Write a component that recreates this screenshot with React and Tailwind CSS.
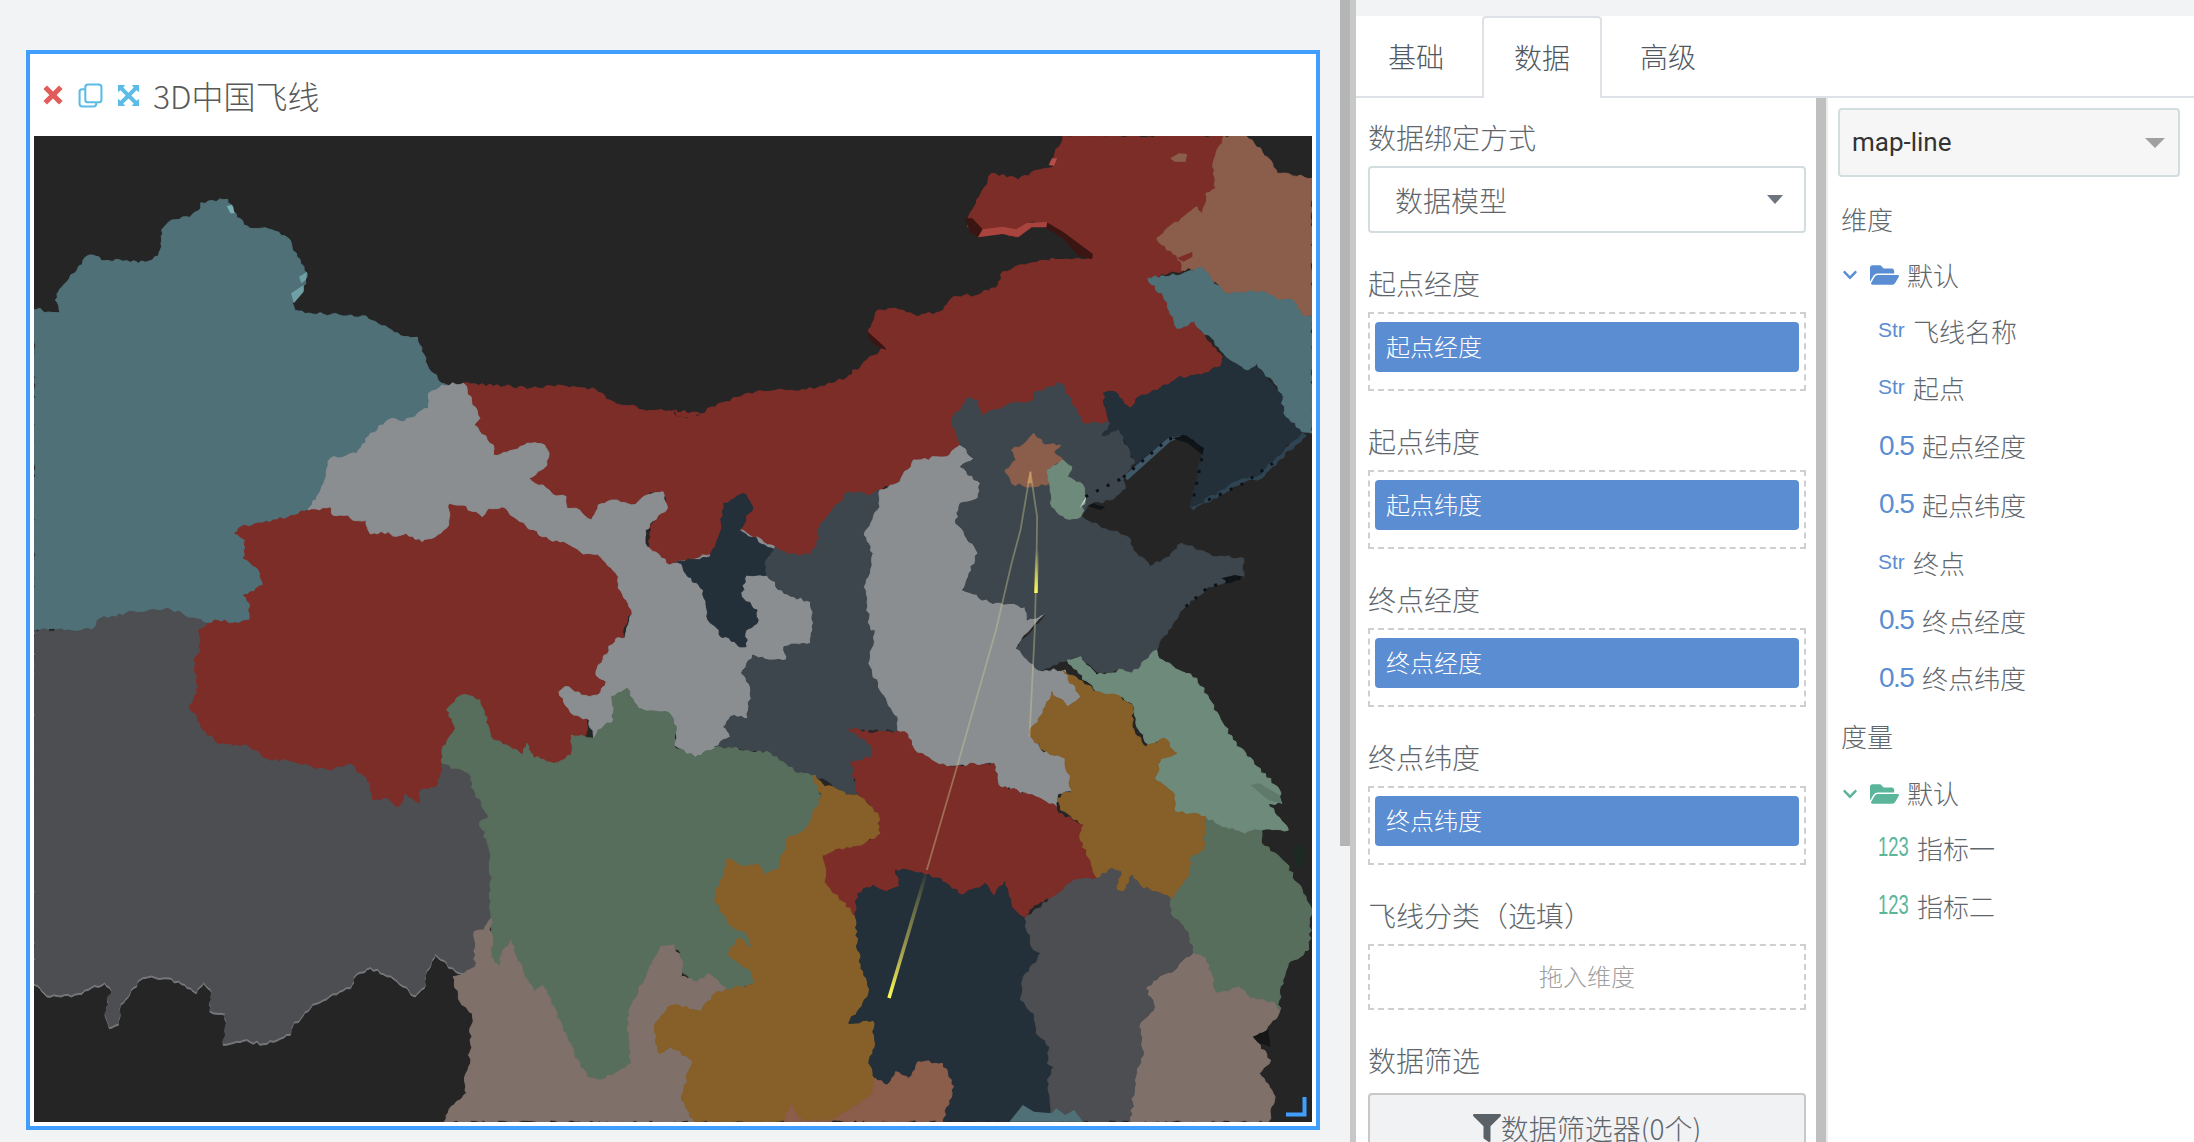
import React from "react";
import { FaChevronDown, FaFolderOpen, FaFilter } from "react-icons/fa";

const O = { A: [0, 130], B: [650, 130], C: [0, 630], D: [650, 630] };
const parse = (s) => {
  const out = [];
  let p = "A";
  s.trim().split(/\s+/).forEach((t) => {
    if (O[t]) { p = t; return; }
    const [x, y] = t.split(",").map(Number);
    out.push([O[p][0] + x / 2.24, O[p][1] + y / 3]);
  });
  return out;
};
const hash = (a, b, c, d, k) => {
  const v = Math.sin(a * 12.9898 + b * 78.233 + c * 37.719 + d * 11.135 + k * 5.37) * 43758.5453;
  return v - Math.floor(v) - 0.5;
};
const rough = (pts, amp = 3.5) => {
  const res = [];
  pts.forEach((p, i) => {
    const q = pts[(i + 1) % pts.length];
    res.push(p);
    const len = Math.hypot(q[0] - p[0], q[1] - p[1]);
    const n = Math.floor(len / 4);
    const fw = p[0] < q[0] || (p[0] === q[0] && p[1] < q[1]);
    const [a, b] = fw ? [p, q] : [q, p];
    const nx = -(b[1] - a[1]) / (len || 1), ny = (b[0] - a[0]) / (len || 1);
    const seq = [];
    for (let k = 1; k <= n; k++) {
      const t = k / (n + 1);
      const m = hash(a[0], a[1], b[0], b[1], k) * amp * Math.min(1, len / 20);
      seq.push([a[0] + (b[0] - a[0]) * t + nx * m, a[1] + (b[1] - a[1]) * t + ny * m]);
    }
    if (!fw) seq.reverse();
    res.push(...seq);
  });
  return res;
};
const toS = (pts) => pts.map((p) => p[0].toFixed(1) + "," + p[1].toFixed(1)).join(" ");

const TEAL = "#4f7077", RED = "#7d2d28", GRAY = "#8a8e91", SLATE = "#3d464d", NAVY = "#232f39", DGRAY = "#4d4e52",
  GREEN = "#586e5d", ORANGE = "#875f28", PINK = "#7f706a", TERRA = "#8b5d4b", LGREEN = "#6e8a7a";

const TIBET = "A 76,1500 205,1500 225,1465 300,1445 375,1435 465,1480 C 500,100 1000,400 1050,430 1065,490 1095,560 1075,575 1095,650 1100,780 1100,865 1085,900 1062,905 1065,1010 1040,1030 1020,1020 975,970 955,1020 950,1070 930,1095 875,1035 830,1010 795,1035 785,1070 700,1120 655,1185 650,1210 590,1238 545,1228 500,1240 505,1150 470,1140 475,1085 455,1055 440,1085 400,1050 340,1035 320,1040 290,1090 270,1120 265,1180 245,1190 235,1150 250,1080 235,1055 160,1095 105,1095 76,1060";

const regions = [
  [TEAL, "A 76,540 90,535 100,548 135,548 124,510 135,475 150,455 200,375 235,392 300,392 310,400 355,378 362,350 362,300 385,270 425,262 450,235 450,218 510,208 530,262 560,295 610,300 650,330 665,380 688,430 680,480 655,520 660,540 700,552 820,558 870,595 905,620 935,622 960,715 990,760 1040,800 1000,900 700,1200 560,1500 76,1500"],
  ["#77787b", TIBET, 0, 2],
  [DGRAY, TIBET],
  [RED, "A 525,1210 540,1190 620,1170 690,1140 740,1130 745,1155 780,1155 790,1170 820,1170 830,1212 870,1205 880,1218 910,1210 945,1235 975,1220 1005,1185 1005,1120 1035,1125 1080,1160 1095,1135 1125,1130 1150,1160 1215,1220 1270,1240 1300,1265 1345,1280 1385,1340 1385,1375 1415,1440 1395,1500 C 1400,25 1380,25 1340,105 1335,135 1358,155 1340,195 1320,200 1265,170 1252,185 1285,255 1315,260 1315,300 1310,320 1280,315 1280,375 1240,400 1205,380 1195,385 1180,340 1170,375 1135,345 1105,330 1075,210 1035,195 1022,205 1000,240 1020,295 990,360 990,400 985,440 975,470 940,480 940,520 910,490 890,530 870,505 835,510 830,460 785,400 740,420 700,410 660,395 600,385 555,345 490,340 450,290 425,225 445,170 435,90 450,60 445,0 A 480,1470 535,1480 560,1470 560,1420 545,1395 590,1365 580,1320 545,1285 550,1230"],
  [RED, "A 1038,760 1190,775 1250,765 1335,780 1365,810 1440,840 1515,840 1515,858 1545,865 1568,850 B 50,842 58,860 90,865 170,815 245,782 350,780 440,745 480,695 525,655 490,610 510,540 550,535 600,560 650,545 680,500 735,495 780,465 790,425 840,405 900,385 985,385 925,310 885,280 850,275 820,320 790,310 735,320 710,290 722,240 765,130 825,150 870,120 905,110 905,80 925,18 1285,18 1260,110 1268,175 1245,190 1240,260 1225,230 1135,325 1190,390 1195,420 1115,445 1150,500 1180,595 1220,575 1260,650 1282,680 1280,705 1235,735 1180,745 1160,765 1095,800 1075,835 1040,785 1015,790 1035,830 1030,880 970,880 950,830 920,760 860,790 860,810 800,825 740,855 735,810 710,805 675,870 695,945 665,980 590,990 560,1055 510,1080 495,1095 445,1085 375,1200 380,1225 360,1275 310,1275 280,1250 200,1200 230,1130 210,1090 165,1120 155,1215 135,1275 60,1295 40,1305 0,1265 0,1190 40,1130 30,1090 0,1085 A 1450,1095 1415,1125 1375,1110 1340,1125 1325,1170 1290,1135 1270,1135 1268,1100 1240,1095 1230,1080 1185,1045 1225,1005 1230,970 1220,945 1190,940 1150,960 1105,975 1105,945 1062,885 1075,865"],
  ["#3a1512", "B 706,265 722,265 745,298 735,322 718,310"],
  ["#3a1512", "B 888,276 925,305 992,372 990,388 960,378 925,325 885,292"],
  ["#a8443d", "B 735,322 745,298 790,290 820,298 845,278 890,276 888,292 855,292 825,322 790,312"],
  ["#3a1512", "B 488,605 525,650 530,660 510,650 490,625"],
  ["#b34d45", "B 893,105 900,85 912,85 905,108"],
  [GRAY, "A 690,1140 715,1090 740,985 800,970 830,910 880,865 905,875 960,835 960,790 990,765 1038,760 1075,865 1062,885 1105,945 1105,975 1150,960 1190,940 1220,945 1230,970 1225,1005 1185,1045 1230,1080 1240,1095 1268,1100 1270,1135 1290,1135 1325,1170 1340,1125 1375,1110 1415,1125 1450,1095 1485,1085 1495,1135 1445,1200 1445,1240 1500,1305 1530,1300 B 60,1295 135,1275 200,1200 280,1250 262,1335 300,1390 360,1415 365,1500 D 360,40 300,90 265,90 230,75 205,130 225,170 220,265 180,260 165,290 180,320 150,350 100,385 55,345 60,300 30,250 C 1510,350 1515,300 1500,250 1430,235 1405,175 1370,200 1375,270 1340,300 1330,325 1320,270 1285,255 1252,185 1265,170 1320,200 1340,195 1358,155 1335,135 1340,105 1380,25 1400,25 A 1415,1440 1385,1375 1385,1340 1345,1280 1300,1265 1270,1240 1215,1220 1150,1160 1125,1130 1095,1135 1080,1160 1035,1125 1005,1120 1005,1185 975,1220 945,1235 910,1210 880,1218 870,1205 830,1212 820,1170 790,1170 780,1155 745,1155 740,1130"],
  [NAVY, "B 60,1295 135,1280 155,1215 165,1120 210,1090 230,1130 200,1200 280,1260 258,1300 262,1335 215,1335 205,1400 240,1440 240,1480 215,1500 D 215,50 200,50 190,35 155,15 155,0 B 130,1470 120,1380 85,1340 70,1300"],
  [SLATE, "B 258,1300 280,1250 310,1275 360,1275 380,1225 375,1200 445,1085 495,1095 515,1080 515,1130 480,1215 500,1270 490,1340 480,1370 495,1500 D 505,0 490,100 520,190 555,260 555,300 500,300 470,300 445,295 500,345 500,380 450,395 465,495 435,490 370,435 330,430 270,370 145,350 180,320 165,290 180,260 220,265 225,170 205,130 230,75 265,90 305,90 300,50 360,40 365,0 B 365,1500 360,1415 300,1390 262,1335"],
  [GRAY, "B 515,1080 560,1055 590,990 665,980 695,945 725,985 695,1010 740,1060 735,1105 695,1120 685,1180 735,1270 715,1330 700,1380 760,1415 840,1430 845,1470 890,1445 850,1500 D 820,55 870,120 930,120 965,200 935,230 900,185 880,250 850,310 875,360 930,385 945,480 915,490 910,530 880,510 820,480 780,465 770,400 690,405 665,410 600,370 555,300 555,260 520,190 490,100 505,0 B 495,1500 480,1370 490,1340 500,1270 480,1215 515,1130"],
  ["#2f4452", "B 1460,908 1470,918 1405,995 1375,1040 1305,1070 1218,1140 1210,1130 1230,1120 1300,1060 1370,1030 1400,985"],
  [NAVY, "B 1015,790 1040,785 1075,835 1095,800 1160,765 1180,745 1235,735 1280,705 1285,670 1335,720 1355,700 1415,790 1420,850 1460,905 1400,985 1370,1030 1300,1060 1230,1120 1210,1130 1240,960 1200,920 1160,930 1090,1005 1050,900 1010,920 1030,880"],
  ["#3f5868", "B 1060,1040 1090,1005 1160,925 1200,915 1165,935 1095,1020 1070,1050"],
  ["#0f1418", "B 1170,925 1200,915 1240,955 1238,975 1205,940"],
  ["#0f1418", "B 975,1100 1000,1125 1020,1130 1010,1140 985,1130"],
  [SLATE, "B 675,870 710,805 735,810 740,855 800,825 860,810 860,790 920,760 950,830 970,880 1030,880 1010,920 1050,900 1085,1000 1060,1040 1065,1075 1030,1110 980,1125 965,1160 990,1180 1070,1220 1090,1270 1120,1310 1165,1280 1190,1240 1270,1280 1330,1285 1330,1340 1250,1370 1200,1430 1160,1500 D 1135,60 1110,90 1080,130 1050,115 1010,130 960,80 870,120 820,55 B 890,1445 845,1470 840,1430 760,1415 700,1380 715,1330 735,1270 685,1180 695,1120 735,1105 740,1060 695,1010 725,985 695,945"],
  ["#0f1418", "B 1280,1345 1310,1335 1330,1340 1300,1360"],
  [TERRA, "B 860,910 885,945 920,945 905,965 925,990 890,1020 895,1060 860,1070 810,1060 795,1020 820,990 810,960 840,940"],
  [LGREEN, "B 925,990 945,1010 935,1040 970,1065 975,1100 965,1160 930,1165 900,1130 895,1060 890,1020 910,1005"],
  [TERRA, "B 1285,18 1335,18 1390,90 1405,130 1483,145 1483,555 1465,560 1440,510 1410,510 1365,485 1290,490 1255,440 1240,415 1190,420 1190,395 1135,325 1225,230 1240,260 1245,190 1268,175 1260,110"],
  [TERRA, "B 1165,85 1185,70 1203,72 1200,95 1175,95"],
  [TEAL, "B 1115,445 1195,430 1240,415 1255,445 1290,490 1365,485 1410,510 1440,510 1465,560 1483,558 1483,910 1460,905 1420,850 1415,790 1360,700 1340,720 1285,670 1220,575 1180,595 1150,500"],
  [RED, "B 1180,385 1215,365 1215,380 1195,395"],
  [GREEN, "C 1022,205 1035,195 1075,210 1105,330 1135,345 1170,375 1180,340 1195,385 1205,380 1240,400 1280,375 1280,315 1310,320 1330,325 1340,300 1375,270 1370,200 1405,175 1430,235 1500,250 1515,300 1510,350 1560,385 D 100,385 150,350 270,370 330,430 370,435 385,500 345,605 310,620 290,710 260,735 240,700 205,710 175,685 145,810 185,890 215,905 230,960 200,925 175,970 225,1020 235,1060 175,1085 130,1030 100,1060 70,1020 65,960 30,945 C 1510,945 1480,950 1450,1030 1410,1135 1405,1200 1415,1300 1385,1325 1340,1350 1315,1340 1285,1270 1260,1190 1230,1100 1215,1065 1195,1085 1170,1020 1145,930 1120,980 1120,1020 1100,980 1100,780 1095,650 1075,575 1095,560 1065,490 1050,430 990,400 990,360 1020,295 1000,240"],
  [PINK, "C 1100,865 1100,980 1120,1020 1120,980 1145,930 1170,1020 1195,1085 1215,1065 1230,1100 1260,1190 1285,1270 1315,1340 1340,1350 1385,1325 1415,1300 1405,1200 1410,1135 1450,1030 1480,950 1510,945 1530,1000 1525,1040 1568,1060 D 100,1060 130,1030 175,1085 150,1200 100,1475 C 995,1475 1010,1430 1030,1410 1045,1390 1040,1350 1050,1310 1058,1150 1035,1125 1015,1040 1040,1030 1065,1010 1062,905 1085,900"],
  [GREEN, "D 1245,560 1290,590 1325,605 1370,600 1370,640 1425,700 1480,830 1475,960 1430,1000 1410,1080 1410,1145 1400,1120 1345,1105 1320,1070 1270,1090 1245,985 1215,970 1205,905 1165,850 1165,805 1205,740 1210,680 1240,660"],
  [PINK, "D 1215,970 1245,985 1270,1090 1320,1070 1345,1105 1400,1120 1410,1145 1380,1200 1350,1220 1390,1290 1365,1330 1400,1400 1385,1475 1075,1475 1085,1350 1105,1265 1095,1190 1130,1130 1110,1075 1140,1040 1175,1020"],
  [LGREEN, "D 935,90 965,80 1000,135 1060,120 1080,130 1110,90 1135,60 1140,85 1225,145 1305,330 1360,410 1410,480 1415,520 1385,520 1430,600 1370,600 1325,605 1290,590 1245,560 1175,545 1175,495 1130,445 1145,385 1180,370 1150,325 1120,350 1090,290 1080,220 1045,195 1000,185 960,130"],
  ["#5f7a6a", "D 1345,465 1365,460 1410,495 1415,520 1385,510"],
  [ORANGE, "D 925,120 960,150 1000,185 1045,195 1080,225 1080,290 1110,350 1150,325 1180,370 1145,385 1130,445 1175,495 1175,545 1245,560 1240,660 1210,680 1205,740 1165,805 1135,785 1100,770 1080,735 1060,785 1045,780 1055,725 1035,715 1000,745 960,620 970,585 920,540 912,505 945,480 930,385 880,360 850,310 880,250 900,185 935,230 965,200"],
  [RED, "D 445,295 500,310 570,305 600,370 665,410 770,400 780,465 880,510 910,530 915,550 970,585 960,620 1000,745 950,750 910,795 860,825 840,865 810,830 795,755 770,800 750,760 700,795 650,745 590,725 550,720 560,770 530,785 500,765 465,790 460,860 430,815 395,765 385,675 440,650 480,640 510,610 510,550 465,490 450,395 500,380 495,345"],
  [ORANGE, "D 365,435 385,460 440,495 465,495 510,550 515,610 480,640 440,650 385,675 395,765 430,815 460,860 465,960 490,1090 445,1180 500,1170 505,1240 490,1300 505,1345 500,1390 470,1420 440,1445 405,1475 100,1475 70,1410 95,1290 45,1250 20,1270 10,1185 40,1130 65,1125 115,1145 145,1090 235,1060 225,1020 175,970 200,925 230,960 215,905 185,890 145,810 175,685 205,710 240,700 260,735 290,710 310,620 345,605 385,500"],
  [NAVY, "D 550,720 590,725 650,745 700,795 750,760 770,800 795,755 810,830 840,865 860,960 875,970 835,1050 830,1110 860,1150 865,1210 895,1250 890,1300 905,1310 890,1350 900,1475 655,1475 680,1370 655,1300 600,1295 580,1345 550,1325 530,1365 505,1345 490,1300 505,1240 500,1170 445,1180 490,1090 465,960 460,860 465,790 500,765 530,785 560,770"],
  [DGRAY, "D 840,865 910,795 950,750 1000,745 1035,715 1055,725 1045,780 1060,785 1080,735 1100,770 1135,785 1165,805 1165,850 1205,905 1215,970 1175,1020 1140,1040 1110,1075 1130,1130 1095,1190 1105,1265 1085,1350 1075,1475 900,1475 890,1350 905,1310 890,1300 895,1250 865,1210 860,1150 830,1110 835,1050 875,970 860,960"],
  [TERRA, "D 505,1345 530,1365 550,1325 580,1345 600,1295 655,1300 680,1370 655,1475 300,1475 315,1425 340,1475 405,1475 440,1445 470,1420 500,1390"],
  [TEAL, "D 805,1475 835,1425 860,1445 900,1450 910,1435 930,1455 950,1440 970,1475"],
  ["#7ab0b4", "A 508,228 520,225 526,250 516,250"],
  ["#6fa0a6", "A 652,490 680,465 680,485 658,520"],
  ["#6fa0a6", "A 670,440 688,425 685,450 675,460"],
  ["#b9d0c4", "B 962,1135 978,1095 975,1115"],
  ["#1d2a24", "D 1440,655 1465,640 1470,690 1450,715"],
  ["#161616", "D 1350,1220 1385,1200 1390,1250 1365,1240"],
];

const Map = () => {
  const P = (k, x, y) => `${(O[k][0] + x / 2.24).toFixed(1)},${(O[k][1] + y / 3).toFixed(1)}`;
  return (
    <svg viewBox="34 136 1278 986" className="block w-[1278px] h-[986px] bg-[#252525]">
      <defs>
        <linearGradient id="t1" gradientUnits="userSpaceOnUse" x1="927" y1="870" x2="889" y2="998">
          <stop offset="0" stopColor="#ffff66" stopOpacity="0" />
          <stop offset="0.55" stopColor="#d8c85a" stopOpacity="0.6" />
          <stop offset="1" stopColor="#ffff55" />
        </linearGradient>
        <linearGradient id="t2" gradientUnits="userSpaceOnUse" x1="1037" y1="550" x2="1036" y2="593">
          <stop offset="0" stopColor="#ffff66" stopOpacity="0" />
          <stop offset="1" stopColor="#ffff55" />
        </linearGradient>
      </defs>
      {regions.map(([c, s, dx, dy], i) => {
        const short = s.length < 90;
        const pts = short ? parse(s) : rough(parse(s));
        return (
          <polygon
            key={i}
            points={toS(pts)}
            fill={c}
            stroke={c}
            strokeWidth={short ? 0 : 1}
            transform={dy ? `translate(${dx} ${dy})` : undefined}
          />
        );
      })}
      <g fill="none" stroke="#0c1216" strokeWidth="3" strokeDasharray="3 9">
        <polyline points={[P("B", 1060, 1042), P("B", 1090, 1008), P("B", 1160, 928), P("B", 1200, 918), P("B", 1240, 960), P("B", 1215, 1120)].join(" ")} />
        <polyline points={[P("B", 975, 1100), P("B", 1065, 1040)].join(" ")} />
        <polyline points={[P("B", 1250, 1110), P("B", 1330, 1060), P("B", 1395, 1000)].join(" ")} />
        <polyline points={[P("B", 1200, 1430), P("B", 1250, 1372), P("B", 1330, 1342)].join(" ")} />
      </g>
      <g fill="none" stroke="#d0cd95" strokeOpacity="0.4" strokeWidth="1.8">
        <polyline points={[P("B", 852, 1025), P("B", 830, 1200), P("B", 810, 1300), P("B", 775, 1500), P("D", 690, 400), P("D", 620, 720)].join(" ")} />
        <polyline points={[P("B", 852, 1025), P("B", 867, 1160), P("B", 866, 1280), P("D", 862, 0), P("D", 850, 320)].join(" ")} />
      </g>
      <polygon points={[P("B", 852, 1025), P("B", 845, 1060), P("B", 856, 1060)].join(" ")} fill="#d8a060" opacity="0.7" />
      <line x1="927" y1="870" x2="889" y2="998" stroke="url(#t1)" strokeWidth="3.5" />
      <line x1="1037" y1="550" x2="1036" y2="593" stroke="url(#t2)" strokeWidth="3.5" />
      <path d="M1304.5 1097 V1114.5 H1286" fill="none" stroke="#409eff" strokeWidth="4" />
    </svg>
  );
};

const cjk = { fontFamily: '"Noto Sans CJK SC", "Liberation Sans", sans-serif' };
const Label = ({ children, cls = "" }) => (
  <div className={"text-[28px] leading-[38px] text-[#5f676d] font-light " + cls}>{children}</div>
);
const Slot = ({ text }) => (
  <div className="h-[79px] border-2 border-dashed border-[#cfcfcf] mt-[10px] px-[5px] py-[8px]">
    <div className="h-[50px] rounded bg-[#5b8dd2] text-white text-[24px] leading-[48px] pl-[11px] font-light">{text}</div>
  </div>
);

const Row = ({ h, children, cls = "" }) => (
  <div className={"flex items-center pb-[2px] text-[26px] text-[#5f676d] font-light " + h + " " + cls}>{children}</div>
);
const Str = ({ t, h }) => (
  <Row h={h} cls="pl-[40px]">
    <span className="w-[35px] text-[21px] text-[#5b8dd2]" style={{ fontFamily: '"Liberation Sans", sans-serif' }}>Str</span>
    {t}
  </Row>
);
const Num = ({ t, h }) => (
  <Row h={h} cls="pl-[41px]">
    <span className="w-[43px] text-[28px] tracking-[-1.5px] text-[#5b8dd2]" style={{ fontFamily: '"Liberation Sans", sans-serif' }}>0.5</span>
    {t}
  </Row>
);
const Int = ({ t, h }) => (
  <Row h={h} cls="pl-[40px]">
    <span className="w-[39px] text-[27px] text-[#5bb59a] inline-block scale-x-[0.68] origin-left" style={{ fontFamily: '"Liberation Sans", sans-serif' }}>123</span>
    {t}
  </Row>
);
const Folder = ({ color, h }) => (
  <Row h={h} cls="pl-[4px]">
    <FaChevronDown className={"w-[16px] h-[16px] mt-[2px] mr-[12px] " + color} />
    <FaFolderOpen className={"w-[29px] h-[26px] mt-[2px] mr-[8px] " + color} />
    默认
  </Row>
);

export default function App() {
  return (
    <div className="w-[2194px] h-[1142px] overflow-hidden flex bg-[#f2f3f5]" style={cjk}>
      <div className="w-[1340px] shrink-0 pl-[26px] pt-[50px]">
        <div className="w-[1294px] h-[1080px] border-4 border-[#409eff] bg-white px-[4px] pb-[4px] flex flex-col">
          <div className="h-[82px] flex items-center pl-[7px] text-[#595959]">
            <svg viewBox="0 0 20 20" className="w-[24px] h-[24px] mr-[13px]">
              <path d="M2 5 L5 2 L10 7 L15 2 L18 5 L13 10 L18 15 L15 18 L10 13 L5 18 L2 15 L7 10 Z" fill="#e25c5c" />
            </svg>
            <svg viewBox="0 0 24 24" className="w-[25px] h-[25px] mr-[14px]" fill="none" stroke="#5cbce6" strokeWidth="2">
              <rect x="7" y="1.5" width="15.5" height="17" rx="2.5" />
              <path d="M7 6 H4 A2.5 2.5 0 0 0 1.5 8.5 V20 A2.5 2.5 0 0 0 4 22.5 H15 A2.5 2.5 0 0 0 17.5 20 V18.5" />
            </svg>
            <svg viewBox="0 0 24 24" className="w-[23px] h-[23px] mr-[13px]" fill="#5cbce6">
              <path d="M1 1 H8.5 L6.6 3.6 L12 9 L17.4 3.6 L15.5 1 H23 V8.5 L20.4 6.6 L15 12 L20.4 17.4 L23 15.5 V23 H15.5 L17.4 20.4 L12 15 L6.6 20.4 L8.5 23 H1 V15.5 L3.6 17.4 L9 12 L3.6 6.6 L1 8.5 Z" />
            </svg>
            <span className="text-[32px] font-light leading-none">3D中国飞线</span>
          </div>
          <Map />
        </div>
      </div>
      <div className="w-[10px] shrink-0 h-[846px] bg-[#b4b6b5]" />
      <div className="w-[6px] shrink-0 h-full bg-[#c8c8c8]" />
      <div className="flex-1 flex flex-col pt-[16px]">
        <div className="h-[82px] bg-white border-b-2 border-[#dee2e6] flex text-[28px] text-[#50585f] font-light">
          <div className="w-[120px] h-[82px] flex items-center justify-center pb-[2px] mr-[6px]">基础</div>
          <div className="w-[120px] h-[82px] flex items-center justify-center pb-[2px] bg-white border-2 border-b-0 border-[#dee2e6] rounded-t">数据</div>
          <div className="w-[120px] h-[82px] flex items-center justify-center pb-[2px] ml-[6px]">高级</div>
        </div>
        <div className="flex-1 flex min-h-0 bg-white overflow-hidden">
          <div className="w-[460px] shrink-0 pl-[12px] pr-[10px] pt-[20px] overflow-hidden">
            <Label>数据绑定方式</Label>
            <div className="h-[67px] mt-[10px] border-2 border-[#d3dde0] rounded flex items-center justify-between pl-[25px] pr-[21px] text-[28px] text-[#5f676d] font-light">
              数据模型
              <span className="w-0 h-0 border-x-[8px] border-x-transparent border-t-[9px] border-t-[#6c757d]" />
            </div>
            <Label cls="mt-[31px]">起点经度</Label>
            <Slot text="起点经度" />
            <Label cls="mt-[31px]">起点纬度</Label>
            <Slot text="起点纬度" />
            <Label cls="mt-[31px]">终点经度</Label>
            <Slot text="终点经度" />
            <Label cls="mt-[31px]">终点纬度</Label>
            <Slot text="终点纬度" />
            <Label cls="mt-[31px]">飞线分类（选填）</Label>
            <div className="h-[66px] mt-[10px] border-2 border-dashed border-[#cfcfcf] flex items-center justify-center pb-[2px] text-[24px] text-[#a0a0a0] font-light">拖入维度</div>
            <Label cls="mt-[31px]">数据筛选</Label>
            <div className="h-[70px] mt-[14px] border-2 border-[#c8c8c8] rounded bg-[#f1f2f4] flex items-center justify-center text-[28px] text-[#5f676d] font-light">
              <FaFilter className="w-[28px] h-[28px] text-[#5a6268]" />
              数据筛选器(0个)
            </div>
          </div>
          <div className="w-[10px] shrink-0 bg-[#bfbfbf]" />
          <div className="w-[2px] shrink-0 bg-[#ececec]" />
          <div className="flex-1 pl-[10px] pr-[14px] pt-[10px]">
            <div className="h-[69px] border-2 border-[#d3dde0] rounded bg-[#f6f6f6] flex items-center justify-between pl-[12px] pr-[13px] text-[26px] text-[#333]" style={{ fontFamily: 'Roboto, sans-serif' }}>
              map-line
              <span className="w-0 h-0 border-x-[10px] border-x-transparent border-t-[10px] border-t-[#a0a0a0]" />
            </div>
            <Row h="h-[56px] mt-[14px]" cls="pl-[3px]">维度</Row>
            <Folder h="h-[56px]" color="text-[#5b8dd2]" />
            <Str h="h-[56px]" t="飞线名称" />
            <Str h="h-[58px]" t="起点" />
            <Num h="h-[59px]" t="起点经度" />
            <Num h="h-[58px]" t="起点纬度" />
            <Str h="h-[58px]" t="终点" />
            <Num h="h-[58px]" t="终点经度" />
            <Num h="h-[57px]" t="终点纬度" />
            <Row h="h-[59px]" cls="pl-[3px]">度量</Row>
            <Folder h="h-[55px]" color="text-[#5bb59a]" />
            <Int h="h-[55px]" t="指标一" />
            <Int h="h-[60px]" t="指标二" />
          </div>
        </div>
      </div>
    </div>
  );
}
